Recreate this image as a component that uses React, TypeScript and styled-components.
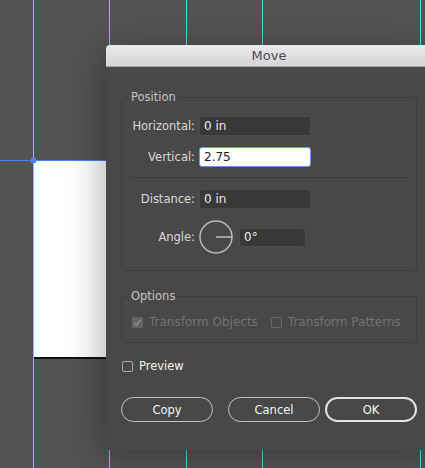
import React from "react";
import styled, { createGlobalStyle } from "styled-components";

const Global = createGlobalStyle`
  html, body { margin: 0; padding: 0; background: #535353; }
  * { box-sizing: border-box; }
`;

const Canvas = styled.div`
  position: relative;
  width: 425px;
  height: 468px;
  overflow: hidden;
  background: #535353;
  font-family: "DejaVu Sans", "Liberation Sans", sans-serif;
`;

const Guide = styled.div<{ $x: number }>`
  position: absolute;
  top: 0;
  bottom: 0;
  left: ${(p) => p.$x}px;
  width: 1px;
  background: #46dcec;
  z-index: 2;
`;

const Artboard = styled.div`
  position: absolute;
  left: 34px;
  top: 160px;
  width: 120px;
  height: 199px;
  background: #ffffff;
  border-bottom: 2px solid #111;
  z-index: 1;
`;

const SelectionLine = styled.div`
  position: absolute;
  left: 0;
  top: 160px;
  width: 120px;
  height: 1px;
  background: #4c7ff2;
  z-index: 3;
`;

const Handle = styled.div`
  position: absolute;
  left: 31px;
  top: 158px;
  width: 5px;
  height: 5px;
  background: #4c7ff2;
  z-index: 3;
`;

const Dialog = styled.div`
  position: absolute;
  left: 106px;
  top: 45px;
  width: 326px;
  height: 405px;
  background: #484848;
  border-radius: 4px 4px 0 0;
  box-shadow: -4px 6px 36px rgba(0, 0, 0, 0.3);
  z-index: 4;
  display: flex;
  flex-direction: column;
`;

const TitleBar = styled.div`
  height: 22px;
  flex: none;
  background: linear-gradient(#ebe9eb, #d6d4d6);
  border-bottom: 1px solid #a8a8a8;
  border-radius: 4px 4px 0 0;
  display: flex;
  align-items: center;
  justify-content: center;
  color: #4b4b4b;
  font-size: 13px;
`;

const Body = styled.div`
  padding: 23px 15px 0 15px;
  display: flex;
  flex-direction: column;
  font-size: 11.5px;
`;

const Group = styled.fieldset<{ $padTop: number; $padBottom: number }>`
  margin: 0;
  border: 1px solid #3d3d3d;
  border-radius: 3px;
  padding: ${(p) => p.$padTop}px 0 ${(p) => p.$padBottom}px 0;
  min-width: 0;
  display: flex;
  flex-direction: column;
  & + & {
    margin-top: 18px;
  }
`;

const Legend = styled.legend`
  margin-left: 6px;
  padding: 0 3px;
  font-size: 11.5px;
  line-height: 14px;
  color: #c4c4c4;
`;

const Row = styled.div<{ $gap: number }>`
  display: flex;
  align-items: center;
  margin-top: ${(p) => p.$gap}px;
`;

const Label = styled.label`
  width: 73px;
  text-align: right;
  color: #d8d8d8;
  margin-right: 4px;
  flex: none;
`;

const Field = styled.div<{ $w: number; $h: number; $focus?: boolean }>`
  width: ${(p) => p.$w}px;
  height: ${(p) => p.$h}px;
  border-radius: 3px;
  background: ${(p) => (p.$focus ? "#ffffff" : "#383838")};
  border: 1px solid ${(p) => (p.$focus ? "#5e9be8" : "#4c4c4c")};
  color: ${(p) => (p.$focus ? "#1a1a1a" : "#ececec")};
  font-size: 12px;
  display: flex;
  align-items: center;
  padding-left: 4px;
`;

const Divider = styled.div`
  height: 1px;
  background: #393939;
  margin: 10px 9px 0 9px;
`;

const Dial = styled.svg`
  flex: none;
  margin-right: 6px;
`;

const CheckRow = styled.div<{ $pl: number }>`
  display: flex;
  align-items: center;
  padding-left: ${(p) => p.$pl}px;
  height: 14px;
`;

const Box = styled.span<{ $disabled?: boolean; $checked?: boolean }>`
  width: 11px;
  height: 11px;
  flex: none;
  border-radius: 2px;
  border: 1px solid ${(p) => (p.$disabled ? "#676767" : "#a9a9a9")};
  background: ${(p) => (p.$checked ? "#646464" : "transparent")};
  display: flex;
  align-items: center;
  justify-content: center;
`;

const CheckText = styled.span<{ $disabled?: boolean; $after: number }>`
  margin-left: 6px;
  margin-right: ${(p) => p.$after}px;
  color: ${(p) => (p.$disabled ? "#727272" : "#f2f2f2")};
  font-size: ${(p) => (p.$disabled ? "12px" : "11.5px")};
  white-space: nowrap;
`;

const PreviewRow = styled(CheckRow)`
  margin-top: 16px;
`;

const Buttons = styled.div`
  display: flex;
  margin-top: 24px;
`;

const Button = styled.button<{ $primary?: boolean; $ml: number }>`
  width: 92px;
  height: 25px;
  margin-left: ${(p) => p.$ml}px;
  border-radius: 13px;
  background: transparent;
  border: ${(p) => (p.$primary ? "2px solid #e4e4e4" : "1px solid #c2c2c2")};
  color: #f6f6f6;
  font-family: "DejaVu Sans", "Liberation Sans", sans-serif;
  font-size: 11.5px;
  font-weight: 400;
  padding: 0;
  display: flex;
  align-items: center;
  justify-content: center;
`;

export default function App() {
  return (
    <Canvas>
      <Global />
      <Guide $x={33} />
      <Guide $x={109} />
      <Guide $x={186} />
      <Guide $x={262} />
      <Guide $x={420} />
      <Artboard />
      <SelectionLine />
      <Handle />
      <Dialog>
        <TitleBar>Move</TitleBar>
        <Body>
          <Group $padTop={12} $padBottom={16}>
            <Legend>Position</Legend>
            <Row $gap={0}>
              <Label>Horizontal:</Label>
              <Field $w={112} $h={20}>0 in</Field>
            </Row>
            <Row $gap={11}>
              <Label>Vertical:</Label>
              <Field $w={112} $h={20} $focus>2.75</Field>
            </Row>
            <Divider />
            <Row $gap={11}>
              <Label>Distance:</Label>
              <Field $w={112} $h={20}>0 in</Field>
            </Row>
            <Row $gap={11}>
              <Label>Angle:</Label>
              <Dial width="34" height="34" viewBox="0 0 34 34">
                <circle cx="17" cy="17" r="16" fill="none" stroke="#bdbdbd" strokeWidth="1.5" />
                <line x1="17" y1="17" x2="33" y2="17" stroke="#bdbdbd" strokeWidth="1.5" />
              </Dial>
              <Field $w={67} $h={19}>0°</Field>
            </Row>
          </Group>
          <Group $padTop={12} $padBottom={13}>
            <Legend>Options</Legend>
            <CheckRow $pl={10}>
              <Box $disabled $checked>
                <svg width="9" height="9" viewBox="0 0 9 9">
                  <path d="M1.5 4.8 L3.6 7 L7.6 1.8" fill="none" stroke="#8a8a8a" strokeWidth="1.6" />
                </svg>
              </Box>
              <CheckText $disabled $after={13}>Transform Objects</CheckText>
              <Box $disabled />
              <CheckText $disabled $after={0}>Transform Patterns</CheckText>
            </CheckRow>
          </Group>
          <PreviewRow $pl={1}>
            <Box />
            <CheckText $after={0}>Preview</CheckText>
          </PreviewRow>
          <Buttons>
            <Button $ml={0}>Copy</Button>
            <Button $ml={15}>Cancel</Button>
            <Button $ml={5} $primary>OK</Button>
          </Buttons>
        </Body>
      </Dialog>
    </Canvas>
  );
}
